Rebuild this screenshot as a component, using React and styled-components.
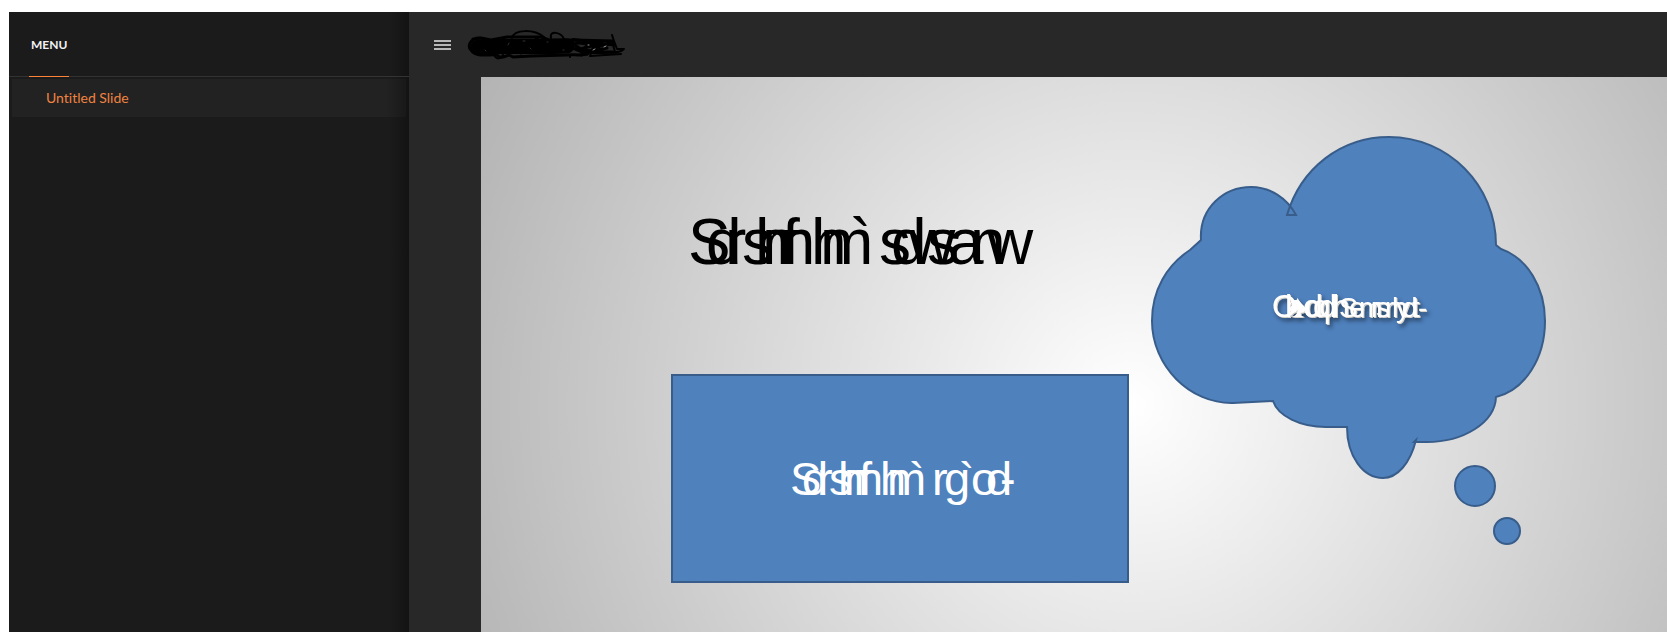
import React from 'react';
import styled, { createGlobalStyle } from 'styled-components';

const GlobalStyle = createGlobalStyle`
	body {
		margin: 0;
		background-color: #ffffff;
		font-family: Lato, 'Open Sans', sans-serif;
		font-variant-ligatures: none;
	}
`;

const Player = styled.div`
	display: flex;
	box-sizing: border-box;
	min-height: 100vh;
	padding: 12px 0 0 9px;
`;

const Sidebar = styled.aside`
	flex: 0 0 400px;
	background: linear-gradient(to left, #131313, #1b1b1b 20px);
`;

const Tabs = styled.div`
	display: flex;
	height: 64px;
	padding: 0 20px;
	border-bottom: 1px solid #333333;
`;

const Tab = styled.button`
	height: 65px;
	padding: 1px 2px 0;
	border: 0;
	border-bottom: 1px solid #fc8338;
	background: none;
	color: #f2f2f2;
	font-family: inherit;
	font-size: 12px;
	font-weight: 700;
`;

const Outline = styled.ul`
	margin: 0;
	padding: 2px 3px;
	list-style: none;
`;

const OutlineLink = styled.a`
	display: block;
	padding: 0 34px;
	line-height: 38px;
	font-size: 14px;
	color: #f08340;
	text-decoration: none;
	background: linear-gradient(to left, #191919, #222222 20px);
`;

const Main = styled.main`
	display: flex;
	flex: 1;
	flex-direction: column;
	min-width: 0;
	background-color: #282828;
`;

const TopBar = styled.header`
	display: flex;
	align-items: center;
	gap: 16px;
	height: 65px;
	padding-left: 25px;
	box-sizing: border-box;
`;

const MenuButton = styled.button`
	display: flex;
	flex-direction: column;
	gap: 2px;
	width: 17px;
	padding: 0;
	border: 0;
	background: none;
`;

const Bar = styled.span`
	height: 2px;
	background-color: #b8b8b8;
`;

const Scribble = styled.svg`
	width: 160px;
	height: 34px;
	fill: none;
	stroke: #000000;
	stroke-linecap: round;
	stroke-linejoin: round;
`;

const Stage = styled.div`
	display: flex;
	flex: 1;
	padding-left: 72px;
`;

const Slide = styled.svg`
	flex: 1;
	min-width: 0;
	background-color: #b2b2b2;
`;

const Shape = styled.g`
	fill: #4f81bd;
	stroke: #385d8a;
	stroke-width: 2;
`;

const Caption = styled.text`
	font-family: 'Liberation Sans', Arial, sans-serif;
	font-size: ${({ $size }) => $size}px;
	fill: ${({ $color }) => $color || '#ffffff'};
	white-space: pre;
`;

const SmallRun = styled.tspan`
	font-size: 28px;
`;

const CloudCaption = styled.g`
	filter: drop-shadow(1px 1px 0 #d8d4cc) drop-shadow(2px 3px 2px rgba(0, 0, 0, 0.45));
`;

const RedactedTitle = () => (
	<Scribble viewBox="466 27 160 34" aria-hidden="true">
		<path strokeWidth="15" d="M477 46 C500 45 540 46 566 45" />
		<path
			strokeWidth="3"
			d="M483 38 C471 34 465 45 470 49 C476 57 487 53 496 54 C500 58 503 56 508 54 L512 56 L530 55 L566 54 C574 53 576 55 586 53 M472 38 L480 37 L490 39 L506 36 L540 36 L548 39 L572 39 L612 40 M476 51 L500 38 L520 52 L536 38 L552 52 L570 40 L580 50 L590 42"
		/>
		<path
			strokeWidth="3"
			d="M560 42 L586 53 L601 41 L575 42 L613 43 L590 45 L577 49 L612 51 M580 54 L592 50 L606 47 M594 43 L606 43 L613 44"
		/>
		<path
			strokeWidth="2"
			d="M511 37 C513 28 533 28 543 36 M550 37 C548 29 560 31 563 38 M572 38 L580 39 M611 34 L613 40 L616 48 L623 48 C620 52 612 51 603 52 L590 52 L589 55 L620 53 M569 54 L569 56 M493 54 C496 59 500 58 502 54 M580 42 L596 47 L611 40 L614 51 M585 51 L575 44"
		/>
		<path
			strokeWidth="1"
			stroke="#303030"
			d="M522 40 L524 40 M508 42 L507 44 M529 47 L530 48 M546 41 L547 41 M562 49 L563 49 M484 49 L485 50"
		/>
		<path strokeWidth="1" stroke="#9a9a9a" d="M592 49 L594 48 M603 46 L605 45 M587 44 L588 44" />
	</Scribble>
);

const SlideContent = () => (
	<Slide
		viewBox="481 77 1186 555"
		preserveAspectRatio="xMinYMin slice"
		role="img"
		aria-label="Untitled Slide"
	>
		<defs>
			<radialGradient id="backdrop" gradientUnits="userSpaceOnUse" cx="1130" cy="405" r="740">
				<stop offset="0" stopColor="#ffffff" />
				<stop offset="1" stopColor="#b2b2b2" />
			</radialGradient>
		</defs>
		<rect x="481" y="77" width="1186" height="555" fill="url(#backdrop)" />

		<Caption
			$size={64}
			$color="#000000"
			y="264"
			x="688 706 725 742 755 762 782 800 811 820 840 850 865 879 891 909 927 940 948 970 987"
		>
			{'Sdrshmf hm ` sdws anw'}
		</Caption>

		<Shape>
			<rect x="672" y="375" width="456" height="207" />
		</Shape>
		<Caption
			$size={47}
			y="495"
			x="790 802 817 829 838 844 859 870 880 887 900 909 920 932 944 959 971 986 1000"
		>
			{'Sdrshmf hm ` rg`od-'}
		</Caption>

		<Shape>
			<path d="M1287 215 C1301 168 1341 137 1389 137 C1448 137 1496 185 1496 245 L1501 249 C1527 258 1545 287 1545 321 C1545 358 1525 390 1496 397 C1495 423 1463 442 1427 442 L1414 442 L1416 440 C1410 464 1397 478 1383 478 C1363 478 1347 456 1347 427 L1326 427 C1300 427 1278 416 1273 401 L1233 403 C1190 404 1152 366 1152 321 C1152 290 1167 265 1190 250 L1201 240 C1199 208 1224 187 1251 187 C1270 187 1287 198 1296 215 Z" />
			<circle cx="1475" cy="486" r="20" />
			<circle cx="1507" cy="531" r="13" />
		</Shape>
		<CloudCaption>
			<Caption $size={32} y="317" x="1272 1285 1289 1303 1305 1313 1319 1332">
				{'Oh♠cdqdh'}
				<SmallRun x="1339 1349 1359 1371 1376 1385 1392 1396 1402 1412 1418">
					{'Semrsrhydt-'}
				</SmallRun>
			</Caption>
		</CloudCaption>
	</Slide>
);

const App = () => (
	<>
		<GlobalStyle />
		<Player>
			<Sidebar>
				<Tabs>
					<Tab type="button">MENU</Tab>
				</Tabs>
				<Outline>
					<li>
						<OutlineLink href="#slide">Untitled Slide</OutlineLink>
					</li>
				</Outline>
			</Sidebar>
			<Main>
				<TopBar>
					<MenuButton type="button" aria-label="Toggle menu">
						<Bar />
						<Bar />
						<Bar />
					</MenuButton>
					<RedactedTitle />
				</TopBar>
				<Stage>
					<SlideContent />
				</Stage>
			</Main>
		</Player>
	</>
);

export default App;
